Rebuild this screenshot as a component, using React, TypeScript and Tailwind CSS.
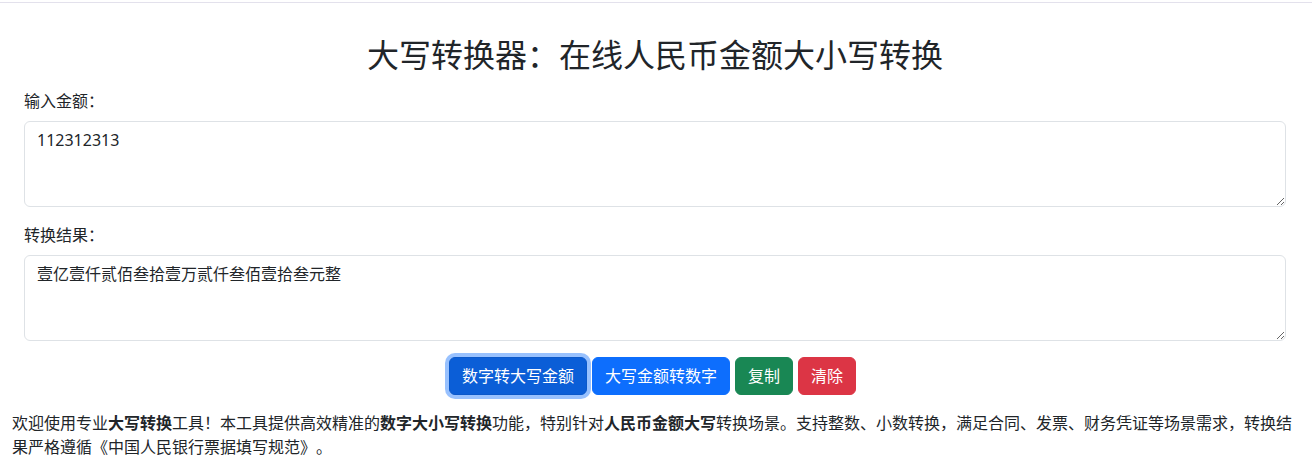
import { useState } from 'react';

const font = 'font-["Noto_Sans","Noto_Sans_CJK_SC",sans-serif]';

export default function App() {
  const [amount, setAmount] = useState('112312313');
  const [result, setResult] = useState('壹亿壹仟贰佰叁拾壹万贰仟叁佰壹拾叁元整');

  return (
    <div className={`${font} min-h-[461px] bg-white text-[16px] leading-6 text-[#212529] [text-spacing-trim:space-all]`}>
      {/* top rule */}
      <div className="h-[3px] border-b border-[#e3e1ec]" />

      <div className="pl-6 pr-[26px]">
        <h2 className="mt-[33px] mb-[15px] text-center text-[32px] leading-[38px] font-normal">
          大写转换器：在线人民币金额大小写转换
        </h2>

        <div className="mb-4">
          <label className="mb-2 block">输入金额：</label>
          <textarea
            rows={3}
            value={amount}
            onChange={(e) => setAmount(e.target.value)}
            className="block h-[86px] w-full rounded-[6px] border border-[#dee2e6] px-3 py-[6px] leading-6 text-[#212529] outline-none"
          />
        </div>

        <div className="mb-4">
          <label className="mb-2 block">转换结果：</label>
          <textarea
            rows={3}
            value={result}
            onChange={(e) => setResult(e.target.value)}
            className="block h-[86px] w-full rounded-[6px] border border-[#dee2e6] px-3 py-[6px] leading-6 text-[#212529] outline-none"
          />
        </div>

        <div className="flex justify-center gap-[5px] pr-[5px]">
          <button className="h-[38px] rounded-[6px] border border-[#0a58ca] bg-[#0b5ed7] px-3 text-white shadow-[0_0_0_4px_rgba(49,132,253,0.5)]">
            数字转大写金额
          </button>
          <button className="h-[38px] rounded-[6px] border border-[#0d6efd] bg-[#0d6efd] px-3 text-white">
            大写金额转数字
          </button>
          <button className="h-[38px] rounded-[6px] border border-[#198754] bg-[#198754] px-3 text-white">
            复制
          </button>
          <button
            onClick={() => { setAmount(''); setResult(''); }}
            className="h-[38px] rounded-[6px] border border-[#dc3545] bg-[#dc3545] px-3 text-white"
          >
            清除
          </button>
        </div>
      </div>

      <p className="mt-4 px-3">
        欢迎使用专业<b className="font-bold">大写转换</b>工具！本工具提供高效精准的<b className="font-bold">数字大小写转换</b>功能，特别针对<b className="font-bold">人民币金额大写</b>转换场景。支持整数、小数转换，满足合同、发票、财务凭证等场景需求，转换结果严格遵循《中国人民银行票据填写规范》。
      </p>
    </div>
  );
}
